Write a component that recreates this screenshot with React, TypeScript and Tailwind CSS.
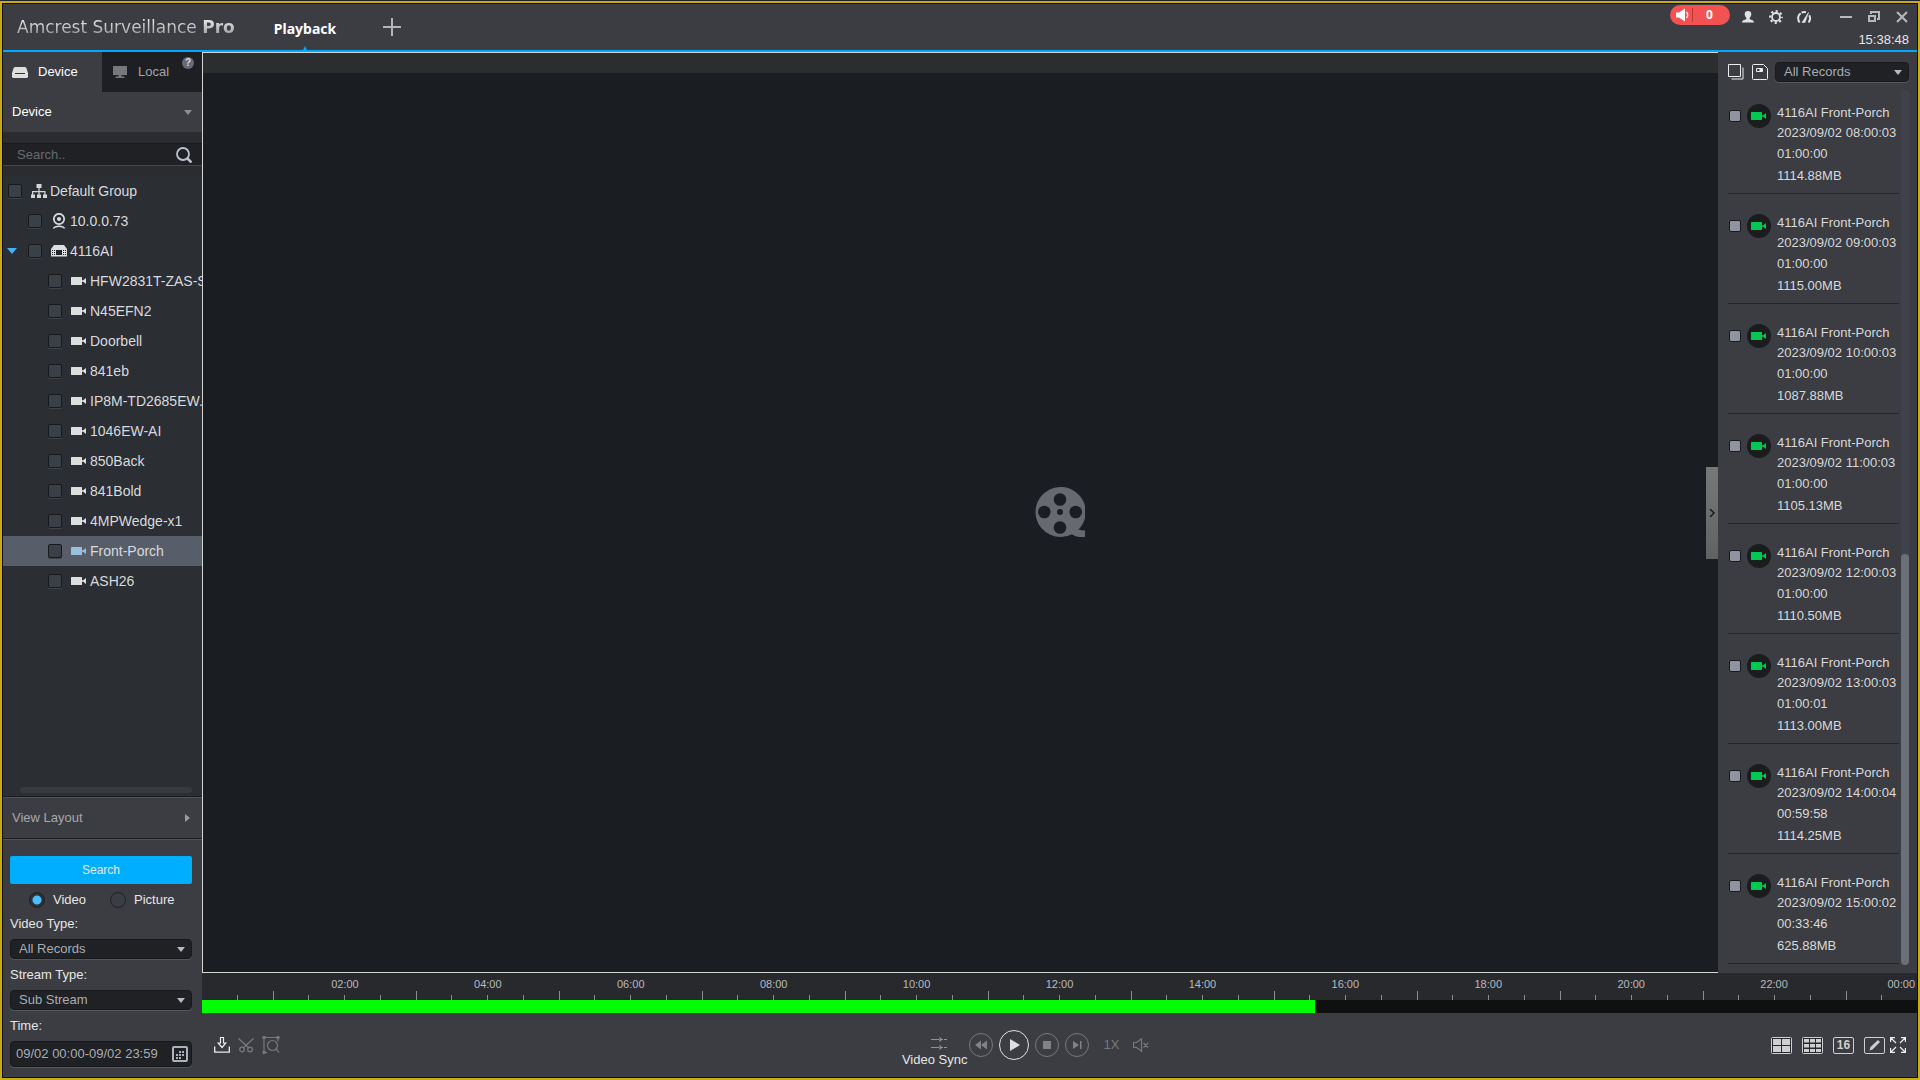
import { useState, type ReactNode } from "react";

type TreeNode = { name: string; level: number; icon: "group" | "webcam" | "nvr" | "camera"; open?: boolean };

const nodes: TreeNode[] = [
  { name: "Default Group", level: 0, icon: "group" },
  { name: "10.0.0.73", level: 1, icon: "webcam" },
  { name: "4116AI", level: 1, icon: "nvr", open: true },
  { name: "HFW2831T-ZAS-S", level: 2, icon: "camera" },
  { name: "N45EFN2", level: 2, icon: "camera" },
  { name: "Doorbell", level: 2, icon: "camera" },
  { name: "841eb", level: 2, icon: "camera" },
  { name: "IP8M-TD2685EW.", level: 2, icon: "camera" },
  { name: "1046EW-AI", level: 2, icon: "camera" },
  { name: "850Back", level: 2, icon: "camera" },
  { name: "841Bold", level: 2, icon: "camera" },
  { name: "4MPWedge-x1", level: 2, icon: "camera" },
  { name: "Front-Porch", level: 2, icon: "camera" },
  { name: "ASH26", level: 2, icon: "camera" },
];

const records = [
  { start: "2023/09/02 08:00:03", length: "01:00:00", size: "1114.88MB" },
  { start: "2023/09/02 09:00:03", length: "01:00:00", size: "1115.00MB" },
  { start: "2023/09/02 10:00:03", length: "01:00:00", size: "1087.88MB" },
  { start: "2023/09/02 11:00:03", length: "01:00:00", size: "1105.13MB" },
  { start: "2023/09/02 12:00:03", length: "01:00:00", size: "1110.50MB" },
  { start: "2023/09/02 13:00:03", length: "01:00:01", size: "1113.00MB" },
  { start: "2023/09/02 14:00:04", length: "00:59:58", size: "1114.25MB" },
  { start: "2023/09/02 15:00:02", length: "00:33:46", size: "625.88MB" },
];

const hours = ["02:00", "04:00", "06:00", "08:00", "10:00", "12:00", "14:00", "16:00", "18:00", "20:00", "22:00"];

const levelWidth = ["w-[5px]", "w-[25px]", "w-[45px]"];

function CameraIcon({ className }: { className: string }) {
  return (
    <svg className={`h-4 w-4 ${className}`} viewBox="0 0 16 16" fill="currentColor" aria-hidden="true">
      <path d="M0 4.5a.5.5 0 0 1 .5-.5h10a.5.5 0 0 1 .5.5v7a.5.5 0 0 1-.5.5H.5a.5.5 0 0 1-.5-.5zM11 7.3h1.2L15 5v6l-2.8-2.3H11z" />
    </svg>
  );
}

function NodeIcon({ icon, active }: { icon: TreeNode["icon"]; active: boolean }) {
  if (icon === "camera") return <CameraIcon className={active ? "text-[#9bc0dd]" : "text-[#dedede]"} />;
  if (icon === "group") {
    return (
      <svg className="h-4 w-4 text-[#d6d6d6]" viewBox="0 0 16 16" fill="currentColor" aria-hidden="true">
        <path d="M5.5 1h5v4h-5zM7.4 5h1.2v3h5.9v4h-1.2V9.2H8.6V12H7.4V9.2H2.2V12H1V8h6.4zM0 11.5h4V15H0zM6 11.5h4V15H6zM12 11.5h4V15h-4z" />
      </svg>
    );
  }
  if (icon === "webcam") {
    return (
      <svg className="h-4 w-4 text-[#dedede]" viewBox="0 0 16 16" fill="none" stroke="currentColor" aria-hidden="true">
        <circle cx="8" cy="6" r="5.2" strokeWidth="1.7" />
        <circle cx="8" cy="6" r="2" fill="currentColor" stroke="none" />
        <path d="M2.500 15.500c1.500-3 9.500-3 11 0" strokeWidth="1.500" />
      </svg>
    );
  }
  return (
    <svg className="h-4 w-4 text-[#dedede]" viewBox="0 0 16 16" aria-hidden="true">
      <path d="M3 2h10l3 4v7.500H0V6z" fill="currentColor" />
      <path d="M5 7h6v5H5z" fill="#25282c" />
      <path d="M1 7.500h3.500M1 9.500h3.500M1 11.500h3.500M12 7.500h3M12 9.500h3M12 11.500h3" stroke="#25282c" strokeDasharray="1 1" />
    </svg>
  );
}

function SelectBox({ id, label, options }: { id: string; label?: string; options: string[] }) {
  return (
    <div className="relative">
      <select
        id={id}
        aria-label={label}
        className="block h-5 w-full appearance-none rounded-sm border border-[#17191c] bg-[#1f2124] pl-2 text-[13px] leading-4 text-[#a9adb5] shadow-[0_1px_0_#52555a]"
      >
        {options.map((o) => (
          <option key={o}>{o}</option>
        ))}
      </select>
      <svg className="pointer-events-none absolute top-2 right-[7px] h-[5px] w-2" viewBox="0 0 8 5" fill="#b4b8c4" aria-hidden="true">
        <path d="M0 0h8L4 5z" />
      </svg>
    </div>
  );
}

function IconButton({ label, className = "", children }: { label: string; className?: string; children: ReactNode }) {
  return (
    <button type="button" aria-label={label} className={`flex shrink-0 items-center justify-center ${className}`}>
      {children}
    </button>
  );
}

function Header() {
  return (
    <header className="flex h-12 shrink-0 border-b-2 border-[#00a8ff] bg-[#3b3d42]">
      <h1 className="w-60 shrink-0 bg-gradient-to-b from-[#f0f0f0] from-30% to-[#909090] to-75% bg-clip-text pl-3.5 font-['DejaVu_Sans'] text-[17px] leading-[46px] whitespace-nowrap text-transparent">
        Amcrest Surveillance <b>Pro</b>
      </h1>
      <nav className="flex items-center">
        <button type="button" className="relative h-full w-[124px] pt-1 font-['Noto_Sans'] text-sm font-bold text-white">
          Playback
          <svg className="absolute bottom-0 left-1/2 h-1 w-1 -translate-x-1/2" viewBox="0 0 4 4" fill="#00a8ff" aria-hidden="true">
            <path d="M2 0l2 4H0z" />
          </svg>
        </button>
        <IconButton label="New tab" className="ml-4 h-full w-[18px]">
          <svg className="h-[18px] w-[18px]" viewBox="0 0 18 18" stroke="#b5b5b5" strokeWidth="2" aria-hidden="true">
            <path d="M9 0v18M0 9h18" />
          </svg>
        </IconButton>
      </nav>
      <div className="ml-auto flex flex-col items-end pr-2">
        <div className="flex h-[22px] items-center">
          <button type="button" aria-label="Alarms" className="mr-[11px] flex h-5 w-[60px] items-center rounded-full bg-[#f35253] pl-1.5 text-white">
            <svg className="h-3.5 w-4 shrink-0" viewBox="0 0 16 14" fill="currentColor" aria-hidden="true">
              <path d="M0 4.500h3L9 .5v13l-6-4H0z" />
              <path d="M10.500 4q2.500 3 0 6" fill="none" stroke="currentColor" strokeWidth="1.300" />
            </svg>
            <span className="h-3.5 border-r border-[#c33436]" />
            <span className="flex-1 pr-1 text-center font-['Noto_Sans'] text-xs leading-5 font-bold">0</span>
          </button>
          <div className="flex gap-3.5 pt-1">
            <IconButton label="User">
              <svg className="h-3.5 w-3.5" viewBox="0 0 14 14" fill="#e2e2e2" aria-hidden="true">
                <path d="M7 1a3.300 3.300 0 0 1 3.300 3.300c0 1.500-.8 2.800-1.600 3.400v1.500c2 .6 4.300 1 4.300 3.300H1c0-2.300 2.300-2.700 4.300-3.300V7.700C4.500 7.100 3.700 5.800 3.700 4.300A3.300 3.300 0 0 1 7 1z" />
              </svg>
            </IconButton>
            <IconButton label="Settings">
              <svg className="h-3.5 w-3.5" viewBox="0 0 14 14" fill="none" stroke="#e2e2e2" aria-hidden="true">
                <circle cx="7" cy="7" r="4" strokeWidth="1.800" />
                <circle cx="7" cy="7" r="5.900" strokeWidth="2" strokeDasharray="2.200 2.434" strokeDashoffset="1.100" />
              </svg>
            </IconButton>
            <IconButton label="System load">
              <svg className="h-3.5 w-3.5" viewBox="0 0 14 14" fill="none" stroke="#e2e2e2" strokeWidth="2" aria-hidden="true">
                <path d="M2.600 12.500C.2 9 1 5 3.600 3.300M4.500 2.700Q6.700 1.700 9 2.300M12.200 5.200c1.400 2.500 1 5-.6 7.300" />
                <path d="M5 12.500L11.500 2.500 8 12.500z" fill="#e2e2e2" strokeWidth=".6" />
              </svg>
            </IconButton>
          </div>
          <div className="ml-7 flex gap-3.5 pt-1">
            <IconButton label="Minimize">
              <svg className="h-3.5 w-3.5" viewBox="0 0 14 14" fill="#b9b9b9" aria-hidden="true">
                <path d="M1 6h12v2H1z" />
              </svg>
            </IconButton>
            <IconButton label="Restore">
              <svg className="h-3.5 w-3.5" viewBox="0 0 14 14" fill="none" stroke="#b9b9b9" strokeWidth="2" aria-hidden="true">
                <path d="M4 4V2h8v7h-2" />
                <path d="M2 6h6v5H2z" />
              </svg>
            </IconButton>
            <IconButton label="Close">
              <svg className="h-3.5 w-3.5" viewBox="0 0 14 14" stroke="#b9b9b9" strokeWidth="2" aria-hidden="true">
                <path d="M2 2l10 10M12 2L2 12" />
              </svg>
            </IconButton>
          </div>
        </div>
        <time className="pt-1.5 text-[13px] leading-4 text-[#e6e6e6]">15:38:48</time>
      </div>
    </header>
  );
}

function DeviceTree({ selected, onSelect }: { selected: string; onSelect: (name: string) => void }) {
  return (
    <ul className="min-h-0 flex-1 overflow-hidden bg-[#2b2e33] text-sm text-[#d8dade]">
      {nodes.map((n) => {
        const active = n.name === selected;
        return (
          <li key={n.name} onClick={() => onSelect(n.name)} className={`flex h-[30px] items-center ${active ? "bg-[#585e69]" : ""}`}>
            <span className={`flex shrink-0 pl-1 ${levelWidth[n.level]}`}>
              {n.open && (
                <svg className="h-1.5 w-2.5" viewBox="0 0 10 6" fill="#3db4f7" aria-hidden="true">
                  <path d="M0 0h10L5 6z" />
                </svg>
              )}
            </span>
            <label className="flex min-w-0 items-center">
              <input
                type="checkbox"
                className="h-3.5 w-3.5 shrink-0 appearance-none rounded-xs border border-[#17191c] bg-[#3a4047] shadow-[0_1px_0_#3f4247] checked:bg-[#00a8ff]"
              />
              <span className="mr-[3px] ml-[9px] shrink-0">
                <NodeIcon icon={n.icon} active={active} />
              </span>
              <span className="whitespace-nowrap">{n.name}</span>
            </label>
          </li>
        );
      })}
    </ul>
  );
}

function Sidebar() {
  const [selected, setSelected] = useState("Front-Porch");
  const [kind, setKind] = useState("Video");

  return (
    <aside className="flex w-[199px] shrink-0 flex-col overflow-hidden bg-[#3b3d42]">
      <div className="flex h-10 shrink-0 text-[13px]">
        <button type="button" className="flex w-[99px] items-center gap-2.5 pl-[9px] text-white">
          <svg className="h-[11px] w-4" viewBox="0 0 16 11" aria-hidden="true">
            <path d="M3 0h10q1 0 1.500 1.500L16 6v3.500Q16 11 14.500 11h-13Q0 11 0 9.500V6l1.500-4.500Q2 0 3 0z" fill="#dedede" />
            <path d="M3 6.500h10" stroke="#333" strokeWidth="1" />
          </svg>
          Device
        </button>
        <button type="button" className="relative flex flex-1 items-center gap-[11px] bg-[#1e1f22] pl-[11px] text-[#a3a5a9]">
          <svg className="h-3 w-3.5" viewBox="0 0 14 12" fill="#77787b" aria-hidden="true">
            <path d="M0 0h14v9H0zM5.500 9h3v1.500H5.500zM2.500 10.500h9V12h-9z" />
          </svg>
          Local
          <span className="absolute top-[5px] right-2 h-3 w-3 rounded-full bg-[#666978] text-center text-[10px] leading-3 font-bold text-[#d9d9de]">?</span>
        </button>
      </div>
      <button type="button" className="flex h-10 shrink-0 items-center justify-between pr-2.5 pl-[9px] text-[13px] text-white">
        Device
        <svg className="h-[5px] w-2" viewBox="0 0 8 5" fill="#8d8e91" aria-hidden="true">
          <path d="M0 0h8L4 5z" />
        </svg>
      </button>
      <div className="shrink-0 bg-[#2b2c2f] pt-[11px] pb-2.5">
        <div className="flex h-[23px] items-center border-y border-t-[#17191c] border-b-[#45474b] bg-[#1f2124] pr-2.5 pl-3.5">
          <input
            type="text"
            aria-label="Search devices"
            placeholder="Search.."
            className="min-w-0 flex-1 bg-transparent text-[13px] outline-none placeholder:text-[#696b70]"
          />
          <IconButton label="Find">
            <svg className="h-4 w-4" viewBox="0 0 16 16" fill="none" stroke="#bcc3cf" aria-hidden="true">
              <circle cx="7" cy="7" r="6" strokeWidth="1.800" />
              <path d="M11 11l4.500 4.500" strokeWidth="2.500" />
            </svg>
          </IconButton>
        </div>
      </div>
      <DeviceTree selected={selected} onSelect={setSelected} />
      <div className="shrink-0 bg-[#2b2e33] pr-2.5 pb-[3px] pl-[17px]">
        <div className="h-1.5 rounded-sm bg-[#383a3f]" />
      </div>
      <button
        type="button"
        className="flex h-[43px] shrink-0 items-center justify-between border-y border-[#191b1e] pr-3 pl-[9px] text-[13px] text-[#a6a8ab] shadow-[0_1px_0_#515357,inset_0_1px_0_#515357]"
      >
        View Layout
        <svg className="h-2 w-[5px]" viewBox="0 0 5 8" fill="#9a9b9e" aria-hidden="true">
          <path d="M0 0v8l5-4z" />
        </svg>
      </button>
      <form className="shrink-0 px-[7px] pt-[17px] pr-2.5 pb-2.5 text-[13px] leading-4 text-[#e6e6e6]">
        <button type="button" className="block h-7 w-full rounded-xs bg-[#00aeff] text-xs">
          Search
        </button>
        <div className="flex gap-6 pt-2 pl-[19px]">
          {["Video", "Picture"].map((k) => (
            <label key={k} className="flex items-center gap-2">
              <input
                type="radio"
                name="kind"
                checked={kind === k}
                onChange={() => setKind(k)}
                className="h-4 w-4 appearance-none rounded-full border border-[#202225] bg-[#393e45] checked:bg-[radial-gradient(circle,#4bbdf8_4px,#2b3037_5px)]"
              />
              {k}
            </label>
          ))}
        </div>
        <label htmlFor="video-type" className="block py-2 pb-[7px]">
          Video Type:
        </label>
        <SelectBox id="video-type" options={["All Records"]} />
        <label htmlFor="stream-type" className="block py-2 pb-[7px]">
          Stream Type:
        </label>
        <SelectBox id="stream-type" options={["Sub Stream", "Main Stream"]} />
        <label htmlFor="time-range" className="block py-2 pb-[7px]">
          Time:
        </label>
        <div className="flex h-[26px] items-center rounded-sm border border-[#17191c] bg-[#1f2124] pr-[3px] pl-[5px] shadow-[0_1px_0_#52555a]">
          <input
            id="time-range"
            type="text"
            defaultValue="09/02 00:00-09/02 23:59"
            className="min-w-0 flex-1 bg-transparent text-[13px] text-[#a9adb5] outline-none"
          />
          <IconButton label="Pick time">
            <svg className="h-4 w-4" viewBox="0 0 16 16" aria-hidden="true">
              <rect x="1" y="1" width="14" height="14" rx="1" fill="none" stroke="#adb1bd" strokeWidth="2" />
              <path d="M7 6h6M4 9h9M4 12h6" stroke="#adb1bd" strokeWidth="2" strokeDasharray="2 1" />
            </svg>
          </IconButton>
        </div>
      </form>
    </aside>
  );
}

function Viewer() {
  return (
    <section className="relative flex min-w-0 flex-1 flex-col border-y border-l border-[#d4d6d4] bg-[#1a1d21]">
      <div className="h-5 shrink-0 bg-[#2c2d2e]" />
      <div className="flex flex-1 items-center justify-center pb-[22px] pl-[198px]">
        <svg className="h-[50px] w-[50px]" viewBox="0 0 50 50" aria-hidden="true">
          <path d="M25 0a25 25 0 0 1 18.500 42.600Q46 43.500 50 43.500V50H44q-4 0-7-2.800A25 25 0 1 1 25 0z" fill="#666a70" />
          <circle cx="25" cy="12.500" r="6.300" fill="#1a1d21" />
          <circle cx="9.300" cy="25" r="6.300" fill="#1a1d21" />
          <circle cx="40.700" cy="25" r="6.300" fill="#1a1d21" />
          <circle cx="25" cy="40.500" r="6.300" fill="#1a1d21" />
          <circle cx="25" cy="25" r="3" fill="#1a1d21" />
        </svg>
      </div>
      <button
        type="button"
        aria-label="Hide records"
        className="absolute top-1/2 right-0 flex h-[92px] w-3 -translate-y-1/2 items-center justify-center bg-gradient-to-b from-[#77787a] to-[#606264]"
      >
        <svg className="h-2 w-1.5" viewBox="0 0 6 8" fill="none" stroke="#15171a" strokeWidth="1.500" aria-hidden="true">
          <path d="M1 0l4 4-4 4" />
        </svg>
      </button>
    </section>
  );
}

function RecordPanel() {
  return (
    <aside className="flex w-[199px] shrink-0 flex-col overflow-hidden bg-[#3b3d42] pb-2">
      <div className="flex h-8 shrink-0 items-end pr-2 pb-0.5 pl-2.5">
        <IconButton label="Select all" className="h-5">
          <svg className="h-4 w-4" viewBox="0 0 16 16" fill="none" stroke="#ececec" aria-hidden="true">
            <path d="M.5.5h12v12H.5zM15 3.500V15H3.500" />
          </svg>
        </IconButton>
        <IconButton label="Export" className="ml-2 h-5">
          <svg className="h-4 w-4" viewBox="0 0 16 16" fill="none" stroke="#ececec" aria-hidden="true">
            <path d="M1.500.5h10l4 4v10q0 1-1 1h-13q-1 0-1-1v-13q0-1 1-1z" />
            <path d="M4.500 4.500h6v3h-6z" />
            <path d="M8 5h2v2H8z" fill="#ececec" />
          </svg>
        </IconButton>
        <div className="ml-[7px] flex-1">
          <SelectBox id="record-filter" label="Record filter" options={["All Records"]} />
        </div>
      </div>
      <div className="flex min-h-0 flex-1 justify-between pr-2 pl-2.5">
        <ul className="w-[171px] overflow-hidden text-[13px] leading-[22px] text-[#d8d9db]">
          {records.map((r) => (
            <li key={r.start} className="h-[110px] border-b border-[#232529] pt-[19px]">
              <label className="flex items-start">
                <input
                  type="checkbox"
                  className="mt-[7px] ml-px h-3 w-3 shrink-0 appearance-none rounded-xs border border-[#17191c] bg-[#9093a0] checked:bg-[#00a8ff]"
                />
                <span className="mt-px ml-1.5 flex h-6 w-6 shrink-0 items-center justify-center rounded-full bg-[#1a1c1e]">
                  <CameraIcon className="text-[#00c853]" />
                </span>
                <span className="ml-1.5 flex flex-col whitespace-nowrap">
                  <span className="leading-5">4116AI Front-Porch</span>
                  <span className="leading-5">{r.start}</span>
                  <span>{r.length}</span>
                  <span>{r.size}</span>
                </span>
              </label>
            </li>
          ))}
        </ul>
        <div className="mt-1.5 flex w-2 flex-col justify-end rounded-full bg-[#3f424a]">
          <div className="h-[47%] rounded-full bg-[#6a7078]" />
        </div>
      </div>
    </aside>
  );
}

function Timeline() {
  return (
    <div className="shrink-0">
      <div className="flex h-[27px] flex-col justify-between bg-[#28292d]">
        <div className="grid grid-cols-24 pt-1 text-[11px] leading-[14px] text-[#b8babe]">
          <span />
          {hours.map((h) => (
            <span key={h} className="col-span-2 text-center">
              {h}
            </span>
          ))}
          <span className="pr-0.5 text-right">00:00</span>
        </div>
        <div className="flex h-[9px] items-end">
          {Array.from({ length: 48 }, (_, i) => (
            <span key={i} className={`flex-1 border-[#8a8c8f] ${i < 47 ? "border-r" : ""} ${i % 4 === 1 ? "h-[9px]" : "h-[5px]"}`} />
          ))}
        </div>
      </div>
      <div className="h-[13px] bg-[#101011]">
        <div className="h-full w-[64.9%] bg-[#00ff00]" />
      </div>
    </div>
  );
}

function RoundButton({ label, children }: { label: string; children: ReactNode }) {
  return (
    <IconButton label={label} className="h-6 w-6 rounded-full border border-[#77797c] text-[#808285]">
      <svg className="h-3 w-3" viewBox="0 0 12 12" fill="currentColor" aria-hidden="true">
        {children}
      </svg>
    </IconButton>
  );
}

function Controls() {
  return (
    <div className="grid h-16 shrink-0 grid-cols-[31fr_auto_34fr] items-center bg-[#3b3d42]">
      <div className="flex gap-2 pl-3">
        <IconButton label="Download">
          <svg className="h-4 w-4" viewBox="0 0 16 16" fill="none" stroke="#ececec" aria-hidden="true">
            <path d="M6.500.5h3V6h2.300L8 10.500 4.200 6h2.300z" strokeWidth="1.200" />
            <path d="M.7 9.500v5.700h14.600V9.500" strokeWidth="1.300" />
          </svg>
        </IconButton>
        <IconButton label="Clip">
          <svg className="h-4 w-4" viewBox="0 0 16 16" fill="none" stroke="#77797c" strokeWidth="1.300" aria-hidden="true">
            <path d="M.5 1.500L11 11M15.500 1.500L5 11" />
            <circle cx="4" cy="12.500" r="2.300" />
            <circle cx="12" cy="12.500" r="2.300" />
          </svg>
        </IconButton>
        <IconButton label="Region search">
          <svg className="h-[18px] w-[18px]" viewBox="0 0 18 18" fill="none" stroke="#77797c" strokeWidth="1.200" aria-hidden="true">
            <path d="M5 16.500H2v-15h14v4" />
            <circle cx="10.500" cy="9.500" r="5" />
            <path d="M14 13l3 3.500" />
            <path d="M.5 0h3v3h-3zM14.500 0h3v3h-3zM.5 15h3v3h-3z" fill="#77797c" stroke="none" />
          </svg>
        </IconButton>
      </div>
      <div className="flex items-center gap-1.5">
        <button type="button" className="-mr-1 flex flex-col items-center pt-3.5 text-[13px] leading-4 text-[#e6e6e6]">
          <svg className="mb-0.5 ml-2 h-3.5 w-4" viewBox="0 0 16 14" aria-hidden="true">
            <path d="M0 3.500h8M13 3.500h3M11 3.500h1M0 11.500h8M13 11.500h3M11 11.500h1" stroke="#909295" />
            <path d="M8.500.8v5.400l3-2.700zM8.500 8.800v5.200l3-2.500z" fill="#909295" />
          </svg>
          Video Sync
        </button>
        <RoundButton label="Slower">
          <path d="M6 1.500v9L0 6zM12 1.500v9L6 6z" />
        </RoundButton>
        <IconButton label="Play" className="h-[30px] w-[30px] rounded-full border border-[#e0e0e0]">
          <svg className="ml-0.5 h-3 w-3" viewBox="0 0 12 12" fill="#dedede" aria-hidden="true">
            <path d="M1 0v12l10-6z" />
          </svg>
        </IconButton>
        <RoundButton label="Stop">
          <path d="M2 2h8v8H2z" />
        </RoundButton>
        <RoundButton label="Next frame">
          <path d="M2 2v8l6-4zM9 2h1.500v8H9z" />
        </RoundButton>
        <span className="ml-2 text-[13px] text-[#77797c]">1X</span>
        <IconButton label="Mute" className="ml-2">
          <svg className="h-3.5 w-4" viewBox="0 0 16 14" fill="none" stroke="#77797c" strokeWidth="1.200" aria-hidden="true">
            <path d="M.6 4.500h3L8.500.8v12.400l-4.900-3.700h-3zM10.500 5l4.500 4.500M15 5l-4.500 4.500" />
          </svg>
        </IconButton>
      </div>
      <div className="flex items-center justify-end gap-2.5 pr-[11px]">
        <IconButton label="4 windows" className="h-[17px] w-[21px]">
          <svg className="h-full w-full" viewBox="0 0 21 17" aria-hidden="true">
            <rect x=".5" y=".5" width="20" height="16" rx="1" fill="#25282c" stroke="#cfcfcf" />
            <path d="M2 2h8v6H2zM11 2h8v6h-8zM2 9h8v6H2zM11 9h8v6h-8z" fill="#cfcfcf" />
          </svg>
        </IconButton>
        <IconButton label="9 windows" className="h-[17px] w-[21px]">
          <svg className="h-full w-full" viewBox="0 0 21 17" aria-hidden="true">
            <rect x=".5" y=".5" width="20" height="16" rx="1" fill="#25282c" stroke="#cfcfcf" />
            <path d="M2 2h5v3.500H2zM8 2h5v3.500H8zM14 2h5v3.500h-5zM2 7h5v3.500H2zM8 7h5v3.500H8zM14 7h5v3.500h-5zM2 12h5v3H2zM8 12h5v3H8zM14 12h5v3h-5z" fill="#cfcfcf" />
          </svg>
        </IconButton>
        <button type="button" aria-label="16 windows" className="h-[17px] w-[21px] rounded-xs border border-[#cfcfcf] text-xs leading-[15px] font-bold text-[#cfcfcf]">
          16
        </button>
        <IconButton label="Custom layout" className="h-[17px] w-[21px] rounded-xs border border-[#cfcfcf]">
          <svg className="h-3 w-3" viewBox="0 0 12 12" fill="#cfcfcf" aria-hidden="true">
            <path d="M.5 11.500l1-3.500L9 1l2 2-7.500 7.500z" />
          </svg>
        </IconButton>
        <IconButton label="Full screen" className="-ml-[5px]">
          <svg className="h-4 w-4" viewBox="0 0 16 16" fill="none" stroke="#ececec" strokeWidth="1.200" aria-hidden="true">
            <path d="M.6 5V.6H5M1 1l5 5M11 .6h4.400V5M15 1l-5 5M.6 11v4.400H5M1 15l5-5M11 15.400h4.400V11M15 15l-5-5" />
          </svg>
        </IconButton>
      </div>
    </div>
  );
}

export default function App() {
  return (
    <div className="h-screen bg-[#20222c] pt-px font-['Liberation_Sans',sans-serif]">
      <div className="h-full border-2 border-[#c9ad0d] bg-[#101010] p-px">
        <div className="flex h-full flex-col overflow-hidden">
          <Header />
          <div className="flex min-h-0 flex-1">
            <Sidebar />
            <main className="flex min-w-0 flex-1 flex-col">
              <div className="flex min-h-0 flex-1">
                <Viewer />
                <RecordPanel />
              </div>
              <Timeline />
              <Controls />
            </main>
          </div>
        </div>
      </div>
    </div>
  );
}
